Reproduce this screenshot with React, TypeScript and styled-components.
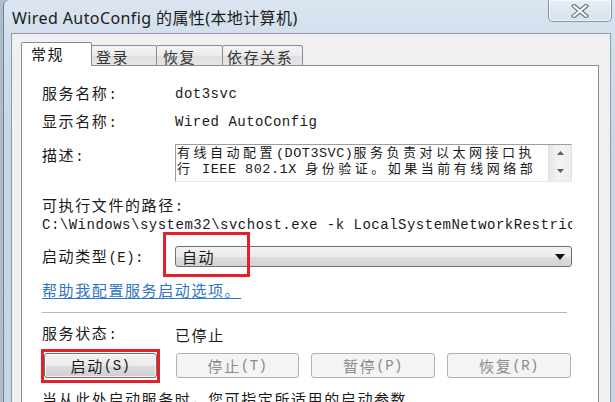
import React from "react";
import styled, { createGlobalStyle } from "styled-components";

const Global = createGlobalStyle`
  html, body { margin: 0; padding: 0; }
  body {
    width: 615px; height: 402px; overflow: hidden;
    font-family: "Liberation Mono", "Noto Sans CJK SC", monospace;
    font-size: 14px;
    letter-spacing: 0.5px;
    color: #1a1a1a;
  }
  * { box-sizing: border-box; }
`;

const Desktop = styled.div`
  width: 615px;
  height: 402px;
  overflow: hidden;
  display: flex;
  padding-left: 3px;
  background: #aebbc9;
`;

const Window = styled.div`
  flex: 1;
  min-width: 0;
  overflow: hidden;
  display: flex;
  flex-direction: column;
  border-left: 1px solid #6f7f93;
  border-top-left-radius: 6px;
  background: linear-gradient(#dce6f2 0px, #d3dfec 33px, #c9d8e8 120px, #c6d5e6 100%);
`;

const TitleBar = styled.div`
  height: 33px;
  flex: none;
  display: flex;
  align-items: flex-start;
  justify-content: space-between;
  padding: 0 3px 0 8px;
`;

const TitleText = styled.div`
  align-self: center;
  margin-top: 1px;
  font-family: "Noto Sans", "Noto Sans CJK SC", sans-serif;
  font-size: 16px;
  letter-spacing: 0.4px;
  color: #1b1b1b;
  white-space: nowrap;
`;

const CloseButton = styled.div`
  width: 64px;
  height: 22px;
  flex: none;
  display: flex;
  align-items: center;
  justify-content: center;
  border: 1px solid #8595a9;
  border-top: none;
  border-radius: 0 0 5px 5px;
  background: linear-gradient(#e8eef5, #d6e1ed);
  box-shadow: inset 0 0 0 1px rgba(255, 255, 255, 0.6);
`;

const Client = styled.div`
  flex: 1;
  min-width: 0;
  display: flex;
  flex-direction: column;
  margin: 0 4px 0 7px;
  padding: 8px 11px 0 9px;
  background: #f0f0f0;
  border: 1px solid #8d9bad;
  border-bottom: none;
`;

const TabStrip = styled.div`
  display: flex;
  align-items: flex-end;
  height: 24px;
  margin-bottom: -1px;
  position: relative;
  z-index: 1;
`;

const Tab = styled.div<{ $active?: boolean; $w: number; $pl: number }>`
  width: ${(p) => p.$w}px;
  height: ${(p) => (p.$active ? 24 : 21)}px;
  padding: 2px 0 0 ${(p) => p.$pl}px;
  line-height: 18px;
  border: 1px solid #898c95;
  border-bottom: ${(p) => (p.$active ? "none" : "1px solid #898c95")};
  margin-left: -1px;
  border-radius: 2px 2px 0 0;
  background: ${(p) =>
    p.$active ? "#ffffff" : "linear-gradient(#f4f4f4, #ebebeb 50%, #dedede 51%, #e6e6e6)"};
  color: ${(p) => (p.$active ? "#111" : "#333")};
  white-space: nowrap;
  &:first-child { margin-left: 0; }
`;

const Panel = styled.div`
  flex: 1;
  min-width: 0;
  display: flex;
  flex-direction: column;
  background: #ffffff;
  border: 1px solid #898c95;
  padding: 18px 26px 0 20px;
  overflow: hidden;
`;

const Field = styled.div<{ $mt?: number; $h?: number; $top?: boolean }>`
  display: flex;
  align-items: ${(p) => (p.$top ? "flex-start" : "center")};
  height: ${(p) => p.$h ?? 20}px;
  margin-top: ${(p) => p.$mt ?? 0}px;
  white-space: nowrap;
  flex: none;
`;

const Label = styled.div<{ $mt?: number }>`
  width: 133px;
  flex: none;
  line-height: 20px;
  margin-top: ${(p) => p.$mt ?? 0}px;
`;

const Line = styled.div<{ $mt?: number }>`
  height: 20px;
  flex: none;
  line-height: 20px;
  margin-top: ${(p) => p.$mt ?? 0}px;
  white-space: nowrap;
  overflow: hidden;
`;

const DescBox = styled.div`
  flex: 1;
  min-width: 0;
  height: 38px;
  display: flex;
  border: 1px solid #9a9ea6;
  border-bottom-color: #e3e9ef;
  border-right-color: #dbdfe6;
  background: #fff;
`;

const DescText = styled.div`
  flex: 1;
  min-width: 0;
  overflow: hidden;
  padding: 0 0 0 1px;
  line-height: 13.6px;
  font-size: 13.5px;
`;

const DescLine = styled.div`
  white-space: nowrap;
  overflow: hidden;
`;

const ScrollBar = styled.div`
  width: 23px;
  flex: none;
  display: flex;
  flex-direction: column;
  justify-content: space-between;
  align-items: center;
  padding: 6px 0 8px;
  background: linear-gradient(90deg, #e6e6e6, #f3f3f3 40%, #ededed);
  border-left: 1px solid #e0e0e0;
`;

const Combo = styled.div`
  flex: 1;
  height: 21px;
  display: flex;
  align-items: center;
  justify-content: space-between;
  padding: 0 6px 0 6px;
  border: 1px solid #707070;
  border-radius: 3px;
  background: linear-gradient(#f3f3f3, #ebebeb 50%, #dddddd 51%, #d3d3d3);
  line-height: 19px;
`;

const Anchor = styled.div`
  position: relative;
  flex: 1;
  min-width: 0;
  display: flex;
`;

const RedMark = styled.div<{ $l: number; $t: number; $w: number; $h: number }>`
  position: absolute;
  left: ${(p) => p.$l}px;
  top: ${(p) => p.$t}px;
  width: ${(p) => p.$w}px;
  height: ${(p) => p.$h}px;
  border: 3px solid #e3212b;
  pointer-events: none;
`;

const Link = styled.a`
  color: #2f74c6;
  text-decoration: underline;
  text-underline-offset: 2px;
  cursor: pointer;
`;

const Separator = styled.div`
  height: 1px;
  margin: 12px 5px 0 0;
  background: #b7b7b7;
  flex: none;
`;

const ButtonRow = styled.div`
  display: flex;
  gap: 12px;
  margin-top: 9px;
  height: 25px;
  flex: none;
  padding-left: 2px;
`;

const ButtonWrap = styled.div`
  position: relative;
  display: flex;
  margin-right: 7px;
`;

const Button = styled.div<{ $w: number; $disabled?: boolean }>`
  width: ${(p) => p.$w}px;
  height: 25px;
  flex: none;
  display: flex;
  align-items: center;
  justify-content: center;
  border: 1px solid ${(p) => (p.$disabled ? "#adb2b5" : "#707070")};
  border-radius: 3px;
  background: ${(p) =>
    p.$disabled ? "#f4f4f4" : "linear-gradient(#f3f3f3, #ebebeb 50%, #dddddd 51%, #cfcfcf)"};
  color: ${(p) => (p.$disabled ? "#8a8a8a" : "#1a1a1a")};
  box-shadow: ${(p) => (p.$disabled ? "none" : "inset 0 0 0 1px rgba(255,255,255,0.7)")};
`;

const Cjk = styled.span<{ $tight?: boolean }>`
  font-family: "Noto Sans CJK SC", sans-serif;
  font-size: ${(p) => (p.$tight ? "13px" : "15px")};
  letter-spacing: ${(p) => (p.$tight ? "3.5px" : "1.6px")};
`;

const CJK_SPLIT = /([\u2E80-\u9FFF\u3000-\u303F\uFF00-\uFFEF]+)/;

function Mixed({ text, tight }: { text: string; tight?: boolean }) {
  const parts = text.split(CJK_SPLIT);
  return (
    <>
      {parts.map((p, i) =>
        i % 2 === 1 ? (
          <Cjk key={i} $tight={tight}>
            {p}
          </Cjk>
        ) : p ? (
          <span key={i}>{p}</span>
        ) : null
      )}
    </>
  );
}

const CloseIcon = () => (
  <svg width="18" height="14" viewBox="0 0 18 14">
    <path d="M3 2 L15 12 M15 2 L3 12" stroke="#6a727d" strokeWidth="4.4" strokeLinecap="square" />
    <path d="M3 2 L15 12 M15 2 L3 12" stroke="#f7f9fb" strokeWidth="2.2" strokeLinecap="square" />
  </svg>
);

const ArrowUp = () => (
  <svg width="7" height="4" viewBox="0 0 7 4">
    <path d="M0 4 L3.5 0 L7 4 Z" fill="#5c5c5c" />
  </svg>
);

const ArrowDown = () => (
  <svg width="7" height="4" viewBox="0 0 7 4">
    <path d="M0 0 L7 0 L3.5 4 Z" fill="#5c5c5c" />
  </svg>
);

const ComboArrow = () => (
  <svg width="10" height="6" viewBox="0 0 10 6">
    <path d="M0 0 L10 0 L5 6 Z" fill="#111" />
  </svg>
);

const tabs = [
  { label: "常规", w: 71, pl: 9, active: true },
  { label: "登录", w: 66, pl: 4 },
  { label: "恢复", w: 67, pl: 6 },
  { label: "依存关系", w: 81, pl: 4 },
];

const buttons = [
  { label: "停止(T)", w: 123 },
  { label: "暂停(P)", w: 124 },
  { label: "恢复(R)", w: 124 },
];

export default function App() {
  return (
    <>
      <Global />
      <Desktop>
        <Window>
          <TitleBar>
            <TitleText>Wired AutoConfig 的属性(本地计算机)</TitleText>
            <CloseButton>
              <CloseIcon />
            </CloseButton>
          </TitleBar>
          <Client>
            <TabStrip>
              {tabs.map((t) => (
                <Tab key={t.label} $active={t.active} $w={t.w} $pl={t.pl}>
                  <Mixed text={t.label} />
                </Tab>
              ))}
            </TabStrip>
            <Panel>
              <Field>
                <Label>
                  <Mixed text="服务名称:" />
                </Label>
                <span>dot3svc</span>
              </Field>
              <Field $mt={8}>
                <Label>
                  <Mixed text="显示名称:" />
                </Label>
                <span>Wired AutoConfig</span>
              </Field>
              <Field $mt={12} $h={38} $top>
                <Label $mt={1}>
                  <Mixed text="描述:" />
                </Label>
                <DescBox>
                  <DescText>
                    <DescLine>
                      <Mixed tight text="有线自动配置(DOT3SVC)服务负责对以太网接口执" />
                    </DescLine>
                    <DescLine>
                      <Mixed tight text="行 IEEE 802.1X 身份验证。如果当前有线网络部" />
                    </DescLine>
                  </DescText>
                  <ScrollBar>
                    <ArrowUp />
                    <ArrowDown />
                  </ScrollBar>
                </DescBox>
              </Field>
              <Line $mt={13}>
                <Mixed text="可执行文件的路径:" />
              </Line>
              <Line>C:\Windows\system32\svchost.exe -k LocalSystemNetworkRestricted</Line>
              <Field $mt={11} $h={21}>
                <Label>
                  <Mixed text="启动类型(E):" />
                </Label>
                <Anchor>
                  <Combo>
                    <Mixed text="自动" />
                    <ComboArrow />
                  </Combo>
                  <RedMark $l={-12} $t={-14} $w={87} $h={45} />
                </Anchor>
              </Field>
              <Line $mt={13}>
                <Link>
                  <Mixed text="帮助我配置服务启动选项。" />
                </Link>
              </Line>
              <Separator />
              <Field $mt={11}>
                <Label>
                  <Mixed text="服务状态:" />
                </Label>
                <Mixed text="已停止" />
              </Field>
              <ButtonRow>
                <ButtonWrap>
                  <Button $w={113}>
                    <Mixed text="启动(S)" />
                  </Button>
                  <RedMark $l={-3} $t={-4} $w={119} $h={34} />
                </ButtonWrap>
                {buttons.map((b) => (
                  <Button key={b.label} $w={b.w} $disabled>
                    <Mixed text={b.label} />
                  </Button>
                ))}
              </ButtonRow>
              <Line $mt={11}>
                <Mixed text="当从此处启动服务时，您可指定所适用的启动参数。" />
              </Line>
            </Panel>
          </Client>
        </Window>
      </Desktop>
    </>
  );
}
